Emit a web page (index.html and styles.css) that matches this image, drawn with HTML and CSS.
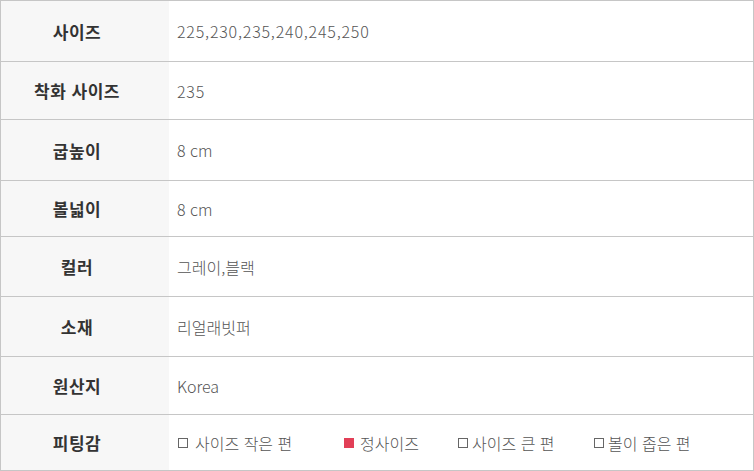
FILE: index.html
```html
<!DOCTYPE html>
<html lang="ko">
<head>
  <meta charset="UTF-8">
  <title>상품 정보</title>
  <link rel="stylesheet" href="styles.css">
</head>
<body>

  <table class="info-table">
    <tr>
      <th>사이즈</th>
      <td class="num">225,230,235,240,245,250</td>
    </tr>
    <tr>
      <th>착화 사이즈</th>
      <td class="num">235</td>
    </tr>
    <tr>
      <th>굽높이</th>
      <td>8 cm</td>
    </tr>
    <tr>
      <th>볼넓이</th>
      <td>8 cm</td>
    </tr>
    <tr>
      <th>컬러</th>
      <td>그레이,블랙</td>
    </tr>
    <tr>
      <th>소재</th>
      <td>리얼래빗퍼</td>
    </tr>
    <tr>
      <th>원산지</th>
      <td>Korea</td>
    </tr>
    <tr>
      <th>피팅감</th>
      <td>
        <div class="fit">
          <span class="fit-item"><span class="box"></span>사이즈 작은 편</span>
          <span class="fit-item on"><span class="box"></span>정사이즈</span>
          <span class="fit-item tight"><span class="box"></span>사이즈 큰 편</span>
          <span class="fit-item tight"><span class="box"></span>볼이 좁은 편</span>
        </div>
      </td>
    </tr>
  </table>

</body>
</html>
```

FILE: styles.css
```css
body {
  margin: 0;
  background-color: #fff;
  font-family: "Noto Sans CJK KR", "Noto Sans", sans-serif;
}
.info-table {
  width: 754px;
  border-collapse: collapse;
  border: 1px solid #c6c6c6;
}
.info-table th,
.info-table td {
  border-bottom: 1px solid #c6c6c6;
  padding: 0;
}
.info-table th {
  width: 152px;
  padding-right: 16px;
  background-color: #f7f7f7;
  color: #333;
  font-size: 17px;
  font-weight: bold;
  letter-spacing: 0.5px;
  text-align: center;
}
.info-table td {
  padding-left: 8px;
  color: #555;
  font-size: 16px;
  font-weight: 300;
  text-align: left;
}
.info-table td.num {
  letter-spacing: 0.8px;
}
.info-table tr:nth-child(1) { height: 61px; }
.info-table tr:nth-child(2) { height: 58px; }
.info-table tr:nth-child(3) { height: 61px; }
.info-table tr:nth-child(4) { height: 56px; }
.info-table tr:nth-child(5) { height: 60px; }
.info-table tr:nth-child(6) { height: 60px; }
.info-table tr:nth-child(7) { height: 58px; }
.info-table tr:nth-child(8) { height: 56px; }

.fit {
  display: grid;
  grid-template-columns: 166px 114px 136px auto;
}
.fit-item {
  display: flex;
  align-items: center;
}
.fit-item .box {
  width: 8px;
  height: 8px;
  border: 1px solid #666;
  margin: 1px 7px 0 1px;
}
.fit-item.on .box {
  background-color: #e23f57;
  border-color: #e23f57;
  margin-right: 6px;
}
.fit-item.tight .box {
  margin-right: 4px;
}
```
